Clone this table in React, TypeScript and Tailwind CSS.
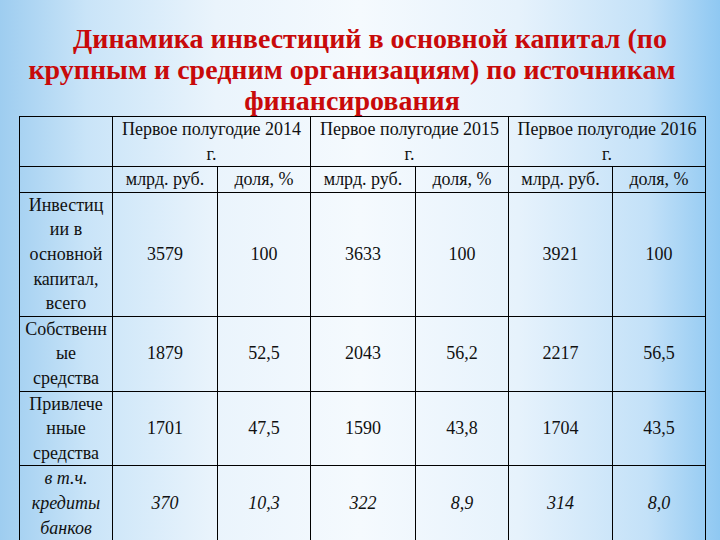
const rows = [
  {
    label: ["Инвестиц", "ии в", "основной", "капитал,", "всего"],
    values: ["3579", "100", "3633", "100", "3921", "100"],
    italic: false,
  },
  {
    label: ["Собственн", "ые", "средства"],
    values: ["1879", "52,5", "2043", "56,2", "2217", "56,5"],
    italic: false,
  },
  {
    label: ["Привлече", "нные", "средства"],
    values: ["1701", "47,5", "1590", "43,8", "1704", "43,5"],
    italic: false,
  },
  {
    label: ["в т.ч.", "кредиты", "банков"],
    values: ["370", "10,3", "322", "8,9", "314", "8,0"],
    italic: true,
  },
];

const years = ["2014", "2015", "2016"];

export default function App() {
  return (
    <div className="w-[720px] h-[540px] overflow-hidden bg-[linear-gradient(90deg,#9ecdf0_0%,#c9e4f8_12%,#eaf4fc_30%,#f5fafe_50%,#e6f2fc_72%,#c3e1f8_90%,#8fc8f2_100%)] [font-family:'Liberation_Serif','Times_New_Roman',serif]">
      {/* заголовок */}
      <div className="w-[704px] pt-[23px] text-center text-[28px] leading-[31px] font-bold text-[#c80a0a]">
        <div className="indent-[36px]">Динамика инвестиций в основной капитал (по</div>
        <div>крупным и средним организациям) по источникам</div>
        <div>финансирования</div>
      </div>

      {/* таблица */}
      <table className="ml-[19px] w-[687px] table-fixed border-collapse text-[18px] leading-[24.6px] text-[#111]">
        <colgroup>
          <col className="w-[93px]" />
          <col className="w-[105px]" />
          <col className="w-[93px]" />
          <col className="w-[105px]" />
          <col className="w-[93px]" />
          <col className="w-[104px]" />
          <col className="w-[93px]" />
        </colgroup>
        <tbody>
          <tr>
            <td className="border border-black"></td>
            {years.map((y) => (
              <td key={y} colSpan={2} className="border border-black text-center p-0 h-[50px]">
                Первое полугодие {y}
                <br />
                г.
              </td>
            ))}
          </tr>
          <tr>
            <td className="border border-black"></td>
            {years.flatMap((y) => [
              <td key={y + "a"} className="border border-black text-center p-0 h-[25px]">
                млрд. руб.
              </td>,
              <td key={y + "b"} className="border border-black text-center p-0">
                доля, %
              </td>,
            ])}
          </tr>
          {rows.map((r, i) => (
            <tr key={i} className={r.italic ? "italic" : ""}>
              <td className="border border-black text-center p-0">
                {r.label.map((l, j) => (
                  <div key={j}>{l}</div>
                ))}
              </td>
              {r.values.map((v, j) => (
                <td key={j} className="border border-black text-center align-middle p-0">
                  {v}
                </td>
              ))}
            </tr>
          ))}
        </tbody>
      </table>
    </div>
  );
}
